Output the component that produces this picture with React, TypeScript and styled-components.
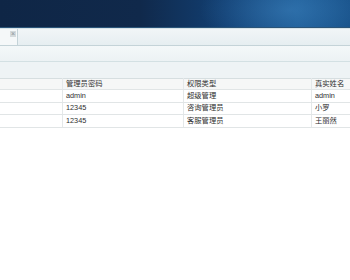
import { createGlobalStyle, styled } from "styled-components";

const GlobalStyle = createGlobalStyle`
  html, body {
    margin: 0;
    padding: 0;
    background: #ffffff;
  }
  body {
    font-family: "Liberation Sans", "Noto Sans CJK SC", sans-serif;
    width: 350px;
    height: 280px;
    overflow: hidden;
  }
`;

const Page = styled.div`
  display: flex;
  flex-direction: column;
  width: 350px;
`;

const Banner = styled.div`
  height: 27px;
  border-bottom: 1px solid #2a5478;
  background:
    radial-gradient(ellipse 90px 40px at 290px 10px, rgba(70, 140, 200, 0.45), rgba(70, 140, 200, 0) 100%),
    linear-gradient(90deg, #0f2646 0%, #10294b 40%, #124074 65%, #1a5892 85%, #154e86 100%);
`;

const TabBar = styled.div`
  display: flex;
  height: 16px;
  background: linear-gradient(#f1f5f7, #e6eef1);
  border-top: 1px solid #d7e3e8;
  border-bottom: 1px solid #c4d3d8;
`;

const Tab = styled.div`
  position: relative;
  width: 17px;
  background: #f5f8f9;
  border-right: 1px solid #c4d3d8;
`;

const Close = styled.span`
  position: absolute;
  right: 1px;
  top: 2px;
  width: 6px;
  height: 6px;
  font-size: 7px;
  line-height: 6px;
  text-align: center;
  color: #8c9498;
  background: #d4dadc;
`;

const Toolbar = styled.div`
  height: 15px;
  background: linear-gradient(#f4f8f9, #ecf2f4);
  border-bottom: 1px solid #d3e0e3;
`;

const Strip = styled.div`
  height: 16px;
  background: #eef3f5;
`;

const Grid = styled.table`
  width: 100%;
  border-collapse: collapse;
  table-layout: fixed;
  font-size: 7.3px;
`;

const HeadRow = styled.tr`
  height: 11px;
  background: #f6f7f7;
  border-top: 1px solid #d6dee0;
`;

const Row = styled.tr`
  height: 12.5px;
  background: #ffffff;
`;

const Cell = styled.td<{ $w?: number }>`
  width: ${(p) => (p.$w ? `${p.$w}px` : "auto")};
  padding: 0 0 0 3px;
  color: #2f2f2f;
  border-bottom: 1px solid #e1e5e6;
  border-left: 1px solid #e4e8e9;
  white-space: nowrap;
  overflow: hidden;
  line-height: 10px;
  &:first-child {
    border-left: none;
  }
`;

const rows = [
  ["admin", "超级管理", "admin"],
  ["12345", "咨询管理员", "小罗"],
  ["12345", "客服管理员", "王丽然"],
];

export default function App() {
  return (
    <Page>
      <GlobalStyle />
      <Banner />
      <TabBar>
        <Tab>
          <Close>×</Close>
        </Tab>
      </TabBar>
      <Toolbar />
      <Strip />
      <Grid>
        <thead>
          <HeadRow>
            <Cell $w={59} />
            <Cell $w={117}>管理员密码</Cell>
            <Cell $w={124}>权限类型</Cell>
            <Cell>真实姓名</Cell>
          </HeadRow>
        </thead>
        <tbody>
          {rows.map((r, i) => (
            <Row key={i}>
              <Cell />
              {r.map((v, j) => (
                <Cell key={j}>{v}</Cell>
              ))}
            </Row>
          ))}
        </tbody>
      </Grid>
    </Page>
  );
}
